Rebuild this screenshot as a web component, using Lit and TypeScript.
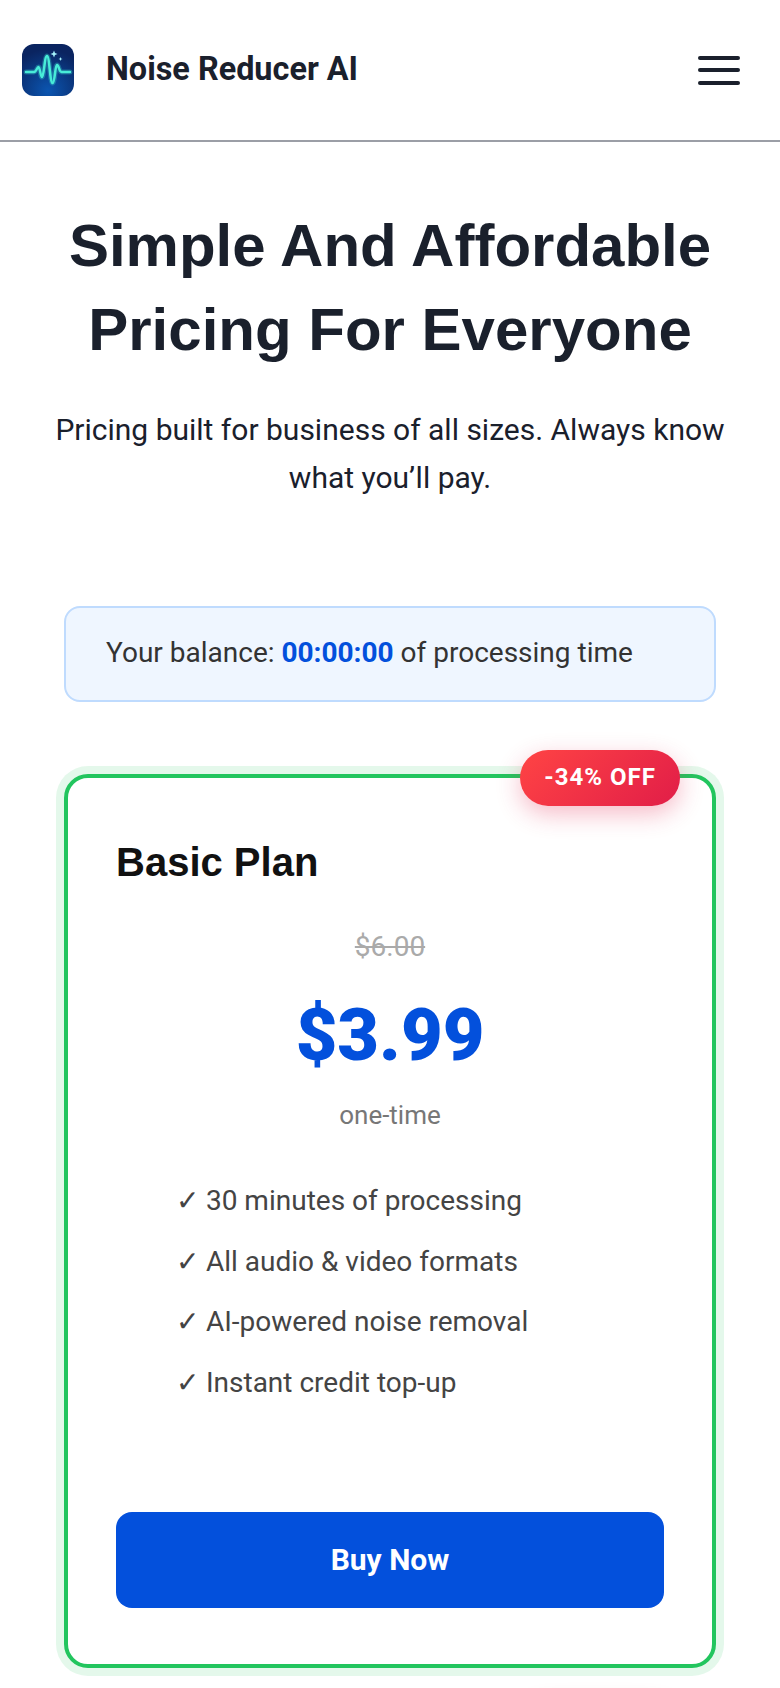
import { LitElement, html, css } from "lit";
import { customElement } from "lit/decorators.js";

const features = ["30 minutes of processing", "All audio & video formats", "AI-powered noise removal", "Instant credit top-up"];

@customElement("app-root")
export class AppRoot extends LitElement {
  static styles = css`
    :host { display: block; height: 1688px; overflow: hidden; background: #fff; font-family: Roboto, sans-serif; color: #1a202c; }
    * { box-sizing: border-box; }
    header { height: 142px; border-bottom: 2px solid #9b9ea6; display: flex; align-items: center; padding: 0 40px 0 22px; }
    .logo { width: 52px; height: 52px; display: block; flex: none; margin-bottom: 1px; }
    .brand { margin: 0 0 2px 32px; font-size: 32.4px; font-weight: 700; flex: 1; }
    .menu { width: 42px; display: flex; flex-direction: column; gap: 8.5px; }
    .menu span { height: 4px; border-radius: 2px; background: #1a202c; display: block; }
    .hero { padding: 62px 40px 0; text-align: center; }
    h1 { margin: 0; font: 700 60px/84px "Liberation Sans", Arial, sans-serif; color: #1a202c; }
    .sub { margin: 34px 0 0; font-size: 30px; line-height: 48px; color: #1a202c; }
    .balance { margin: 104px 64px 0; height: 96px; border: 2px solid #bfdbfe; border-radius: 16px; background: #eff6ff; padding: 0 40px 4px; display: flex; align-items: center; font-size: 28px; color: #333; white-space: pre; }
    .balance b { color: #0350dc; font-weight: 700; }
    .card { position: relative; margin: 72px 64px 0; height: 894px; border: 4px solid #22c55e; border-radius: 24px; box-shadow: 0 0 0 8px rgba(34,197,94,.12); background: #fff; padding: 59px 48px 0; }
    .badge { position: absolute; top: -28px; right: 32px; width: 160px; height: 56px; padding-bottom: 2px; border-radius: 28px; background: linear-gradient(135deg, #ff4444, #e11d48); box-shadow: 0 8px 24px rgba(225,29,72,.3); color: #fff; font-size: 24px; font-weight: 700; letter-spacing: 1px; display: flex; align-items: center; justify-content: center; }
    h2 { margin: 0; font: 700 40px/50px "Liberation Sans", Arial, sans-serif; color: #111; }
    .was { margin-top: 42px; text-align: center; font-size: 28px; line-height: 36px; color: #aaa; text-decoration: line-through; }
    .price { margin-top: 26px; text-align: center; font-size: 72px; line-height: 90px; font-weight: 900; color: #0350dc; }
    .per { margin-top: 16px; text-align: center; font-size: 26px; line-height: 36px; color: #777; }
    ul { list-style: none; margin: 38px 0 0; padding: 0 0 0 60px; }
    li { font-size: 28px; line-height: 60.5px; color: #444; }
    .buy { margin-top: 99px; width: 100%; height: 96px; padding: 0 0 2px; border: 0; border-radius: 16px; background: #0350dc; color: #fff; font: 700 30px Roboto, sans-serif; }
    .next { margin-top: 56px; }
  `;

  render() {
    return html`
      <header>
        <svg class="logo" viewBox="0 0 52 52">
          <defs>
            <radialGradient id="bg" cx="50%" cy="90%" r="80%">
              <stop offset="0" stop-color="#0b55b0" />
              <stop offset="1" stop-color="#0a2460" />
            </radialGradient>
          </defs>
          <rect width="52" height="52" rx="12" fill="url(#bg)" />
          <path d="M4 28H12C14.500 28 15 23 16.500 23C18 23 18.500 33 20 33C22 33 22.500 12 25 12C27.500 12 28 39 30.500 39C33 39 33 21 35 21C37 21 37 28 39.500 28H48" fill="none" stroke="#3ee6d4" stroke-opacity=".3" stroke-width="5" stroke-linecap="round" stroke-linejoin="round" />
          <path d="M4 28H12C14.500 28 15 23 16.500 23C18 23 18.500 33 20 33C22 33 22.500 12 25 12C27.500 12 28 39 30.500 39C33 39 33 21 35 21C37 21 37 28 39.500 28H48" fill="none" stroke="#48ecd8" stroke-width="2.500" stroke-linecap="round" stroke-linejoin="round" />
          <path d="M32 6.500l1 2.500 2.500 1-2.500 1-1 2.500-1-2.500-2.500-1 2.500-1zM38.500 13l.6 1.400 1.400.6-1.400.6-.6 1.400-.6-1.400-1.400-.6 1.400-.6z" fill="#a5f3fc" />
        </svg>
        <div class="brand">Noise Reducer AI</div>
        <div class="menu"><span></span><span></span><span></span></div>
      </header>
      <section class="hero">
        <h1>Simple And Affordable<br />Pricing For Everyone</h1>
        <p class="sub">Pricing built for business of all sizes. Always know what you’ll pay.</p>
      </section>
      <div class="balance">Your balance: <b>00:00:00</b> of processing time</div>
      <article class="card">
        <span class="badge">-34% OFF</span>
        <h2>Basic Plan</h2>
        <div class="was">$6.00</div>
        <div class="price">$3.99</div>
        <div class="per">one-time</div>
        <ul>${features.map((f) => html`<li>✓ ${f}</li>`)}</ul>
        <button class="buy">Buy Now</button>
      </article>
      <article class="card next"><span class="badge"></span></article>
    `;
  }
}
